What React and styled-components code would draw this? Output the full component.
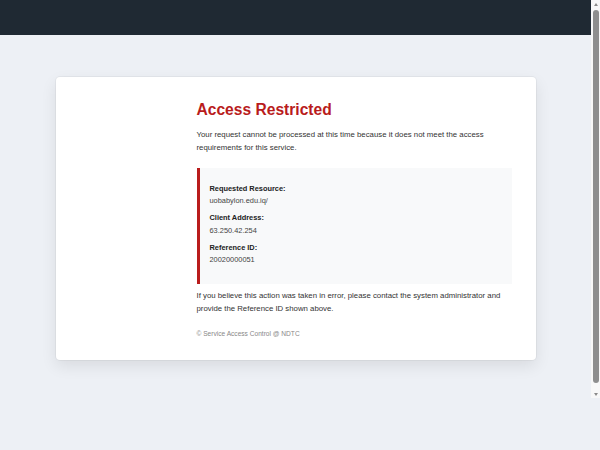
import React from "react";
import styled, { createGlobalStyle } from "styled-components";

const GlobalStyle = createGlobalStyle`
  html, body {
    margin: 0;
    padding: 0;
    background: #edf0f5;
    font-family: "Liberation Sans", Arial, sans-serif;
  }
`;

const Window = styled.div`
  height: 398px;
  display: flex;
  background: #edf0f5;
`;

const Viewport = styled.div`
  flex: 1;
  min-width: 0;
  overflow: hidden;
`;

const ScrollRail = styled.div`
  width: 9px;
  background: #f8f8f8;
  display: flex;
  flex-direction: column;
  align-items: center;
`;

const ArrowButton = styled.div`
  height: 8px;
  display: flex;
  align-items: center;
  justify-content: center;

  &::before {
    content: "";
    width: 0;
    height: 0;
    border-left: 2.5px solid transparent;
    border-right: 2.5px solid transparent;
    ${(p) =>
      p.$down
        ? "border-top: 3px solid #8a8a8a;"
        : "border-bottom: 3px solid #8a8a8a;"}
  }
`;

const Thumb = styled.div`
  margin: 2px 0 7px;
  width: 6px;
  flex: 1;
  border-radius: 3px;
  background: #8e8e8e;
`;

const TopBar = styled.header`
  height: 35px;
  background: #1f2933;
`;

const Main = styled.main`
  padding: 42px 0 46px;
`;

const Card = styled.section`
  max-width: 480px;
  margin: 0 auto;
  box-sizing: border-box;
  padding: 24px 24px 21px;
  background: #fff;
  border-radius: 4px;
  box-shadow: 0 0 0 1px rgba(0, 0, 0, 0.04), 0 6px 16px rgba(0, 0, 0, 0.09);
  display: grid;
  grid-template-columns: 93px 1fr;
  column-gap: 24px;
`;

const Aside = styled.div``;

const Body = styled.div`
  min-width: 0;
`;

const Title = styled.h1`
  margin: 0 0 8px;
  font-size: 15.6px;
  line-height: 1.2;
  font-weight: 700;
  color: #b91c1c;
`;

const Text = styled.p`
  margin: ${(p) => p.$top || 0}px 0 0;
  font-size: 7.8px;
  line-height: 13px;
  color: #333;
`;

const InfoBox = styled.div`
  margin-top: 14.5px;
  padding: 14.5px 10px 17.5px;
  background: #f8f9fa;
  border-left: 3px solid #b91c1c;
  display: flex;
  flex-direction: column;
  gap: 4.5px;
`;

const Item = styled.div`
  font-size: 7.4px;
  line-height: 12.5px;
`;

const Label = styled.div`
  font-weight: 700;
  color: #222;
`;

const Value = styled.div`
  color: #444;
`;

const Copyright = styled.div`
  margin-top: 14px;
  font-size: 6.6px;
  line-height: 10px;
  color: #888;
`;

const details = [
  ["Requested Resource:", "uobabylon.edu.iq/"],
  ["Client Address:", "63.250.42.254"],
  ["Reference ID:", "20020000051"],
];

const App = () => (
  <>
    <GlobalStyle />
    <Window>
      <Viewport>
        <TopBar />
        <Main>
          <Card>
            <Aside />
            <Body>
              <Title>Access Restricted</Title>
              <Text>
                Your request cannot be processed at this time because it does not meet the access
                requirements for this service.
              </Text>
              <InfoBox>
                {details.map(([label, value]) => (
                  <Item key={label}>
                    <Label>{label}</Label>
                    <Value>{value}</Value>
                  </Item>
                ))}
              </InfoBox>
              <Text $top={5}>
                If you believe this action was taken in error, please contact the system administrator and
                provide the Reference ID shown above.
              </Text>
              <Copyright>© Service Access Control @ NDTC</Copyright>
            </Body>
          </Card>
        </Main>
      </Viewport>
      <ScrollRail>
        <ArrowButton />
        <Thumb />
        <ArrowButton $down />
      </ScrollRail>
    </Window>
  </>
);

export default App;
